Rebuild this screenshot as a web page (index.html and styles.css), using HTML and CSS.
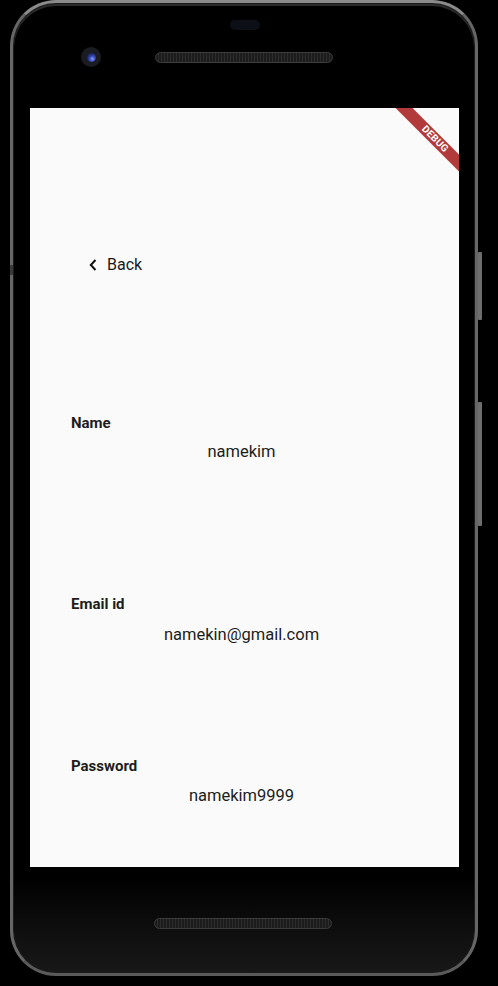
FILE: index.html
```html
<!DOCTYPE html>
<html>
<head>
<meta charset="utf-8">
<link rel="stylesheet" href="styles.css">
</head>
<body>
<div class="phone">
  <div class="btn btn-power"></div>
  <div class="btn btn-volume"></div>
  <div class="rim-notch"></div>
  <div class="top-bezel">
    <div class="sensor"></div>
    <div class="top-row">
      <div class="camera"><div class="lens"></div></div>
      <div class="speaker"></div>
    </div>
  </div>
  <div class="screen">
    <div class="debug-banner"><span>DEBUG</span></div>
    <div class="back">
      <svg class="chev" width="8" height="12" viewBox="0 0 8 12"><path d="M6.5 1 L1.8 6 L6.5 11" fill="none" stroke="#111" stroke-width="2" stroke-linejoin="miter"/></svg>
      <span>Back</span>
    </div>
    <div class="field f-name">
      <div class="label">Name</div>
      <div class="value">namekim</div>
    </div>
    <div class="field f-email">
      <div class="label">Email id</div>
      <div class="value">namekin@gmail.com</div>
    </div>
    <div class="field f-pass">
      <div class="label">Password</div>
      <div class="value">namekim9999</div>
    </div>
  </div>
  <div class="bottom-bezel">
    <div class="speaker bottom"></div>
  </div>
</div>
</body>
</html>
```

FILE: styles.css
```css
html, body {
  margin: 0;
  padding: 0;
  background: #000;
}
body {
  width: 498px;
  height: 986px;
  overflow: hidden;
  font-family: Roboto, "Noto Sans", sans-serif;
}
.phone {
  position: relative;
  margin-left: 10px;
  width: 468px;
  height: 976px;
  box-sizing: border-box;
  border: 3px solid #666;
  border-top-color: #8a8a8a;
  border-bottom-color: #5a5a5a;
  border-radius: 46px;
  background: linear-gradient(to bottom, #000 0%, #000 90%, #0d0d0d 95%, #181818 100%);
  box-shadow: inset 0 0 0 1px #1a1a1a, inset 0 2px 0 1px #2a2a2a;
  display: flex;
  flex-direction: column;
  padding: 0 16px 0 17px;
}
.btn {
  position: absolute;
  right: -7px;
  width: 4px;
  background: #6e6e6e;
  border-radius: 1px;
}
.btn-power { top: 249px; height: 68px; }
.btn-volume { top: 399px; height: 124px; }
.rim-notch {
  position: absolute;
  left: -3px;
  top: 262px;
  width: 3px;
  height: 10px;
  background: #3a3a3a;
}
.top-bezel {
  height: 105px;
  display: flex;
  flex-direction: column;
  align-items: center;
}
.sensor {
  margin-top: 17px;
  width: 30px;
  height: 10px;
  border-radius: 5px;
  background: #0d0f16;
}
.top-row {
  align-self: stretch;
  display: flex;
  align-items: center;
  margin-top: 17px;
}
.camera {
  margin-left: 51px;
  width: 20px;
  height: 20px;
  border-radius: 50%;
  background: #1b1c22;
  display: flex;
  align-items: center;
  justify-content: center;
}
.lens {
  width: 9px;
  height: 9px;
  border-radius: 50%;
  background: radial-gradient(circle at 60% 65%, #8fa0ff 0, #3248b8 35%, #141a40 80%);
}
.speaker {
  margin-left: 54px;
  width: 178px;
  height: 11px;
  box-sizing: border-box;
  border-radius: 6px;
  border: 1px solid #3c3c3c;
  background: repeating-linear-gradient(to right, #1c1c1c 0, #1c1c1c 2px, #2c2c2c 2px, #2c2c2c 3px);
}
.screen {
  position: relative;
  overflow: hidden;
  width: 429px;
  height: 759px;
  flex: none;
  background: #fafafa;
  box-sizing: border-box;
  padding: 148px 0 0 41px;
  color: #1d1d1d;
}
.debug-banner {
  position: absolute;
  top: 25px;
  right: -36px;
  width: 120px;
  height: 12px;
  background: #b33a3a;
  transform: rotate(45deg);
  display: flex;
  align-items: center;
  justify-content: center;
}
.debug-banner span {
  color: #fff;
  font-size: 10px;
  font-weight: 700;
  letter-spacing: 0.2px;
  line-height: 12px;
}
.back {
  display: flex;
  align-items: center;
  height: 20px;
  margin-top: -1px;
  margin-left: 18px;
  font-size: 16px;
  line-height: 20px;
  color: #1a1a1a;
}
.chev {
  margin-right: 10px;
}
.field {
  width: 341px;
}
.f-name { margin-top: 139px; }
.f-email { margin-top: 133px; }
.f-pass { margin-top: 112px; }
.label {
  font-size: 15px;
  font-weight: 700;
  line-height: 18px;
  color: #1d1d1d;
}
.value {
  margin-top: 11px;
  text-align: center;
  font-size: 16.5px;
  line-height: 20px;
  color: #1d1d1d;
}
.f-name .value { margin-top: 10px; }
.f-email .value { margin-top: 12px; }
.bottom-bezel {
  flex: 1;
  display: flex;
  justify-content: center;
}
.speaker.bottom {
  margin: 51px 0 0 -3px;
}
```
